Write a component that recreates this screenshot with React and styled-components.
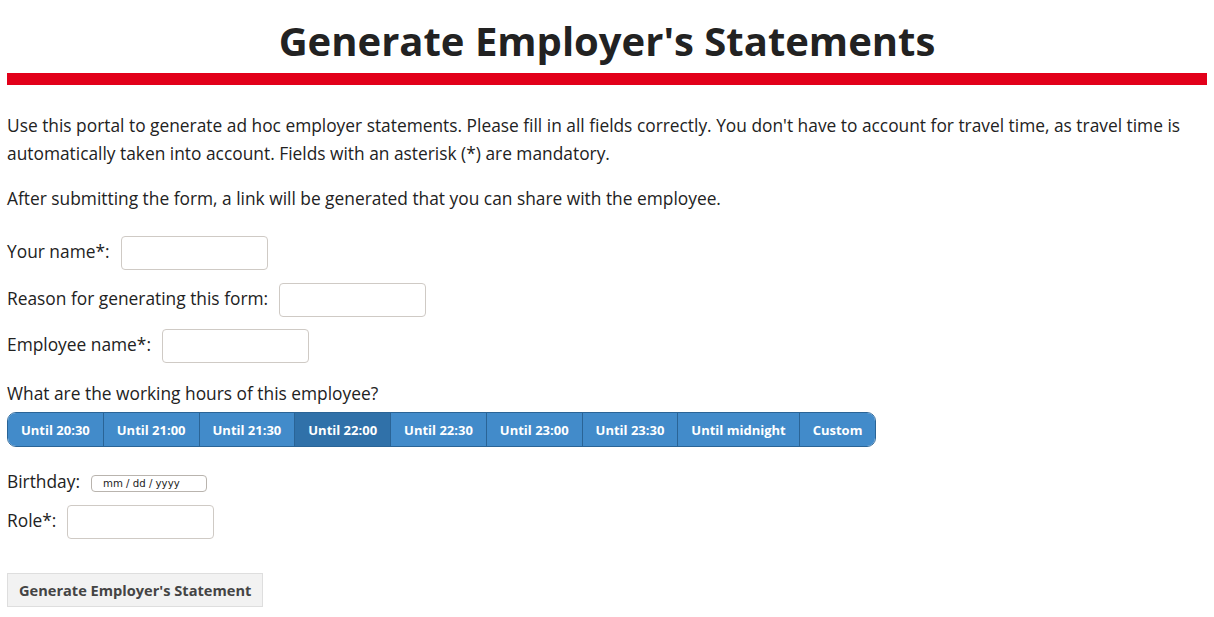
import React, { useState } from 'react';
import styled, { createGlobalStyle } from 'styled-components';

const GlobalStyle = createGlobalStyle`
  body {
    margin: 0;
    padding: 0 7px;
    font-family: "Open Sans", "Liberation Sans", sans-serif;
    color: #222;
    background: #fff;
  }
`;

const Page = styled.div`
  padding-top: 14px;
`;

const Title = styled.h1`
  margin: 0;
  text-align: center;
  font-size: 40px;
  font-weight: 700;
  line-height: 54px;
  color: #222;
`;

const RedBar = styled.div`
  height: 12px;
  background-color: #e2001a;
  margin-top: 5px;
`;

const Intro = styled.p`
  margin: 26px 0 0;
  font-size: 17.35px;
  line-height: 28px;
`;

const Note = styled.p`
  margin: 17px 0 0;
  font-size: 17.35px;
  line-height: 28px;
`;

const Form = styled.form`
  margin-top: 24px;
  display: flex;
  flex-direction: column;
  align-items: flex-start;
`;

const Field = styled.label`
  display: flex;
  align-items: center;
  gap: 11px;
  font-size: 17.35px;
  line-height: 28px;
  margin-bottom: ${(p) => p.$gap ?? 13}px;
`;

const LabelText = styled.span`
  padding-bottom: 4px;
`;

const TextInput = styled.input`
  box-sizing: border-box;
  width: 147px;
  height: 34px;
  border: 1px solid #cfcac5;
  border-radius: 4px;
  background: #fff;
  font-family: inherit;
  font-size: 14px;
  padding: 0 8px;
  outline: none;
`;

const Question = styled.div`
  font-size: 17.35px;
  line-height: 28px;
  margin-bottom: 5px;
`;

const Segmented = styled.div`
  display: flex;
  border: 1px solid #2a6496;
  border-radius: 9px;
  overflow: hidden;
  margin-bottom: 20px;
`;

const Segment = styled.button`
  border: none;
  border-left: 1px solid #2a6496;
  background-color: ${(p) => (p.$active ? '#3071a9' : '#428bca')};
  color: #fff;
  font-family: inherit;
  font-weight: 700;
  font-size: 13px;
  height: 33px;
  padding: 0 13px;
  cursor: pointer;

  &:first-child {
    border-left: none;
  }
`;

const DateInput = styled.input`
  box-sizing: border-box;
  width: 116px;
  height: 17px;
  border: 1px solid #b9b4ae;
  border-radius: 4px;
  font-family: "DejaVu Sans", "Liberation Sans", sans-serif;
  font-size: 10.2px;
  padding: 0 0 0 11px;
  color: #222;
  background: #fff;
  outline: none;

  &::placeholder {
    color: #222;
    opacity: 1;
  }
`;

const SubmitButton = styled.button`
  margin-top: 21px;
  background-color: #f2f2f2;
  border: 1px solid #dedede;
  color: #444;
  font-family: inherit;
  font-weight: 700;
  font-size: 14.6px;
  height: 34px;
  padding: 0 11px;
  cursor: pointer;
`;

const hours = [
  'Until 20:30',
  'Until 21:00',
  'Until 21:30',
  'Until 22:00',
  'Until 22:30',
  'Until 23:00',
  'Until 23:30',
  'Until midnight',
  'Custom',
];

const App = () => {
  const [selected, setSelected] = useState('Until 22:00');

  return (
    <Page>
      <GlobalStyle />
      <Title>Generate Employer's Statements</Title>
      <RedBar />
      <Intro>
        Use this portal to generate ad hoc employer statements. Please fill in all fields correctly. You don't have to
        account for travel time, as travel time is automatically taken into account. Fields with an asterisk (*) are
        mandatory.
      </Intro>
      <Note>After submitting the form, a link will be generated that you can share with the employee.</Note>
      <Form onSubmit={(e) => e.preventDefault()}>
        <Field>
          <LabelText>Your name*:</LabelText>
          <TextInput type="text" />
        </Field>
        <Field $gap={12}>
          <LabelText>Reason for generating this form:</LabelText>
          <TextInput type="text" />
        </Field>
        <Field $gap={16}>
          <LabelText>Employee name*:</LabelText>
          <TextInput type="text" />
        </Field>
        <Question>What are the working hours of this employee?</Question>
        <Segmented>
          {hours.map((h) => (
            <Segment key={h} type="button" $active={h === selected} onClick={() => setSelected(h)}>
              {h}
            </Segment>
          ))}
        </Segmented>
        <Field $gap={6}>
          <LabelText>Birthday:</LabelText>
          <DateInput type="text" placeholder="mm / dd / yyyy" />
        </Field>
        <Field>
          <LabelText>Role*:</LabelText>
          <TextInput type="text" />
        </Field>
        <SubmitButton type="submit">Generate Employer's Statement</SubmitButton>
      </Form>
    </Page>
  );
};

export default App;
